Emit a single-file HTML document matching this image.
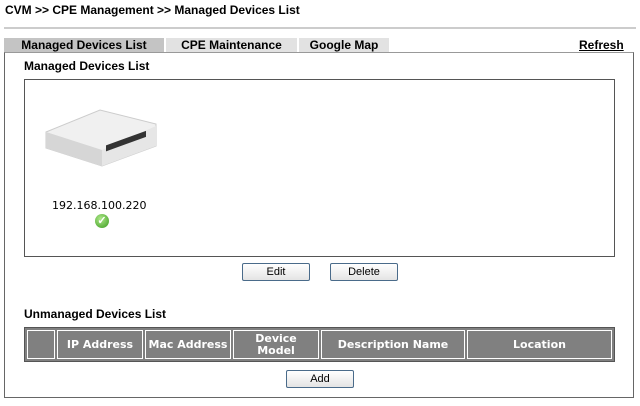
<!DOCTYPE html><html><head><style>
body{margin:0;width:640px;height:406px;background:#fff;font-family:"Liberation Sans",sans-serif;position:relative;overflow:hidden}
.a{position:absolute}
.b{font-weight:bold;font-size:12px;color:#000}
.btn{position:absolute;height:16px;border:1px solid #4a6b8a;border-radius:2px;background:linear-gradient(#fff,#e4e4e4);font-size:11px;text-align:center;line-height:16px}
table{position:absolute;left:24px;top:327px;width:591px;height:35px;border-collapse:separate;border-spacing:2px;background:#808080;border:1px solid #555}
td{border:1px solid #fff;color:#fff;font-family:"DejaVu Sans",sans-serif;font-weight:bold;font-size:11px;text-align:center;padding:0;line-height:12px}
</style></head><body>
<div class="a b" style="left:5px;top:3px">CVM &gt;&gt; CPE Management &gt;&gt; Managed Devices List</div>
<div class="a" style="left:4px;top:27px;width:632px;height:2px;background:#ccc"></div>
<div class="a b" style="left:4px;top:38px;width:160px;height:14px;background:#c4c4c4;text-align:center;line-height:14px">Managed Devices List</div>
<div class="a b" style="left:166px;top:38px;width:131px;height:14px;background:#e2e2e2;text-align:center;line-height:14px">CPE Maintenance</div>
<div class="a b" style="left:299px;top:38px;width:90px;height:14px;background:#e2e2e2;text-align:center;line-height:14px">Google Map</div>
<div class="a b" style="left:579px;top:38px;text-decoration:underline">Refresh</div>
<div class="a" style="left:4px;top:52px;width:628px;height:344px;border:1px solid #666;border-top:1px solid #999"></div>
<div class="a b" style="left:24px;top:59px">Managed Devices List</div>
<div class="a" style="left:24px;top:79px;width:589px;height:176px;border:1px solid #555"></div>
<svg class="a" style="left:44px;top:104px" width="116" height="64">
<polygon points="2,28 56,6 112,20 112,42 58,62 2,44" fill="#f0f0f0" stroke="#ccc"/>
<polygon points="2,28 58,46 112,22 112,42 58,62 2,44" fill="#e6e6e6"/>
<polygon points="2,28 58,46 58,62 2,44" fill="#d6d6d6"/>
<rect x="62" y="40" width="40" height="6" fill="#333" transform="skewY(-20) translate(0,24)"/>
</svg>
<div class="a" style="left:52px;top:199px;font-family:'DejaVu Sans',sans-serif;font-size:11px">192.168.100.220</div>
<div class="a" style="left:95px;top:214px;width:14px;height:14px;border-radius:50%;background:radial-gradient(circle at 40% 35%,#aee88a,#3a9a1e);color:#fff;font-size:11px;line-height:14px;text-align:center;font-weight:bold">✓</div>
<div class="btn" style="left:242px;top:263px;width:66px">Edit</div>
<div class="btn" style="left:330px;top:263px;width:66px">Delete</div>
<div class="a b" style="left:24px;top:307px">Unmanaged Devices List</div>
<table><tr><td style="width:26px"></td><td style="width:84px">IP Address</td><td style="width:84px">Mac Address</td><td style="width:84px">Device<br>Model</td><td style="width:142px">Description Name</td><td>Location</td></tr></table>
<div class="btn" style="left:286px;top:370px;width:66px">Add</div>
</body></html>
